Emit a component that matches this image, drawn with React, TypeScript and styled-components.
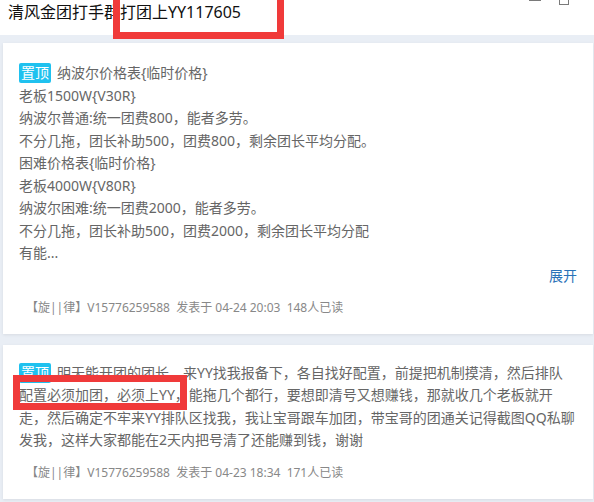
import React from 'react'
import styled, { createGlobalStyle } from 'styled-components'

const GlobalStyle = createGlobalStyle`
  html, body {
    margin: 0;
    padding: 0;
    background: #e9eef5;
    font-family: "Noto Sans", "Noto Sans CJK SC", sans-serif;
  }
`

const pinnedLines = [
  '纳波尔价格表{临时价格}',
  '老板1500W{V30R}',
  '纳波尔普通:统一团费800，能者多劳。',
  '不分几拖，团长补助500，团费800，剩余团长平均分配。',
  '困难价格表{临时价格}',
  '老板4000W{V80R}',
  '纳波尔困难:统一团费2000，能者多劳。',
  '不分几拖，团长补助500，团费2000，剩余团长平均分配',
  '有能...',
]

const secondPost =
  '明天能开团的团长，来YY找我报备下，各自找好配置，前提把机制摸清，然后排队配置必须加团，必须上YY，能拖几个都行，要想即清号又想赚钱，那就收几个老板就开走，然后确定不牢来YY排队区找我，我让宝哥跟车加团，带宝哥的团通关记得截图QQ私聊发我，这样大家都能在2天内把号清了还能赚到钱，谢谢'

export default function App() {
  return (
    <Page>
      <GlobalStyle />
      <Header>
        <Title>清风金团打手群打团上YY117605</Title>
        <WindowControls>
          <Minimize />
          <Maximize />
        </WindowControls>
      </Header>
      <List>
        <Card $top={19}>
          <Body>
            {pinnedLines.map((line, i) => (
              <Line key={i}>
                {i === 0 && <Badge>置顶</Badge>}
                {line}
              </Line>
            ))}
          </Body>
          <Expand>展开</Expand>
          <Meta>【旋||律】V15776259588&nbsp;&nbsp;发表于 04-24 20:03&nbsp;&nbsp;148人已读</Meta>
        </Card>
        <Card $top={17}>
          <Body>
            <Badge>置顶</Badge>
            {secondPost}
          </Body>
          <Meta>【旋||律】V15776259588&nbsp;&nbsp;发表于 04-23 18:34&nbsp;&nbsp;171人已读</Meta>
        </Card>
      </List>
      <Marker $left={113} $top={-7} $width={171} $height={46} />
      <Marker $left={13} $top={375} $width={174} $height={35} />
    </Page>
  )
}

const Page = styled.div`
  position: relative;
  width: 594px;
  height: 502px;
  overflow: hidden;
`

const Header = styled.div`
  height: 35px;
  background: #ffffff;
  display: flex;
  justify-content: space-between;
  align-items: flex-start;
  padding: 0 0 0 8px;
  box-sizing: border-box;
`

const Title = styled.div`
  font-size: 16px;
  line-height: 24px;
  color: #111;
`

const WindowControls = styled.div`
  display: flex;
  align-items: flex-start;
  gap: 18px;
  padding-right: 25px;
`

const Minimize = styled.div`
  width: 12px;
  height: 1px;
  background: #7a7a7a;
`

const Maximize = styled.div`
  width: 8px;
  height: 8px;
  margin-top: -5px;
  border: 1px solid #7a7a7a;
`

const List = styled.div`
  display: flex;
  flex-direction: column;
  gap: 11px;
  padding: 8px 0 0 3px;
`

const Card = styled.div<{ $top: number }>`
  width: 590px;
  box-sizing: border-box;
  background: #ffffff;
  padding: ${p => p.$top}px 18px 16px 16px;
  box-shadow: 0 1px 3px rgba(0, 0, 0, 0.08);
`

const Body = styled.div`
  font-size: 14px;
  line-height: 22.5px;
  color: #666;
`

const Line = styled.div``

const Badge = styled.span`
  display: inline-block;
  background: #1fc1ef;
  color: #ffffff;
  font-size: 14px;
  line-height: 20px;
  padding: 0 2px;
  border-radius: 2px;
  margin-right: 6px;
`

const Expand = styled.div`
  text-align: right;
  margin-right: -2px;
  font-size: 14px;
  line-height: 22px;
  color: #2a72b8;
`

const Meta = styled.div`
  margin-top: 11px;
  padding-left: 7px;
  font-size: 12px;
  line-height: 20px;
  color: #888;
`

const Marker = styled.div<{ $left: number; $top: number; $width: number; $height: number }>`
  position: absolute;
  left: ${p => p.$left}px;
  top: ${p => p.$top}px;
  width: ${p => p.$width}px;
  height: ${p => p.$height}px;
  box-sizing: border-box;
  border: 7px solid #f03a3a;
`
